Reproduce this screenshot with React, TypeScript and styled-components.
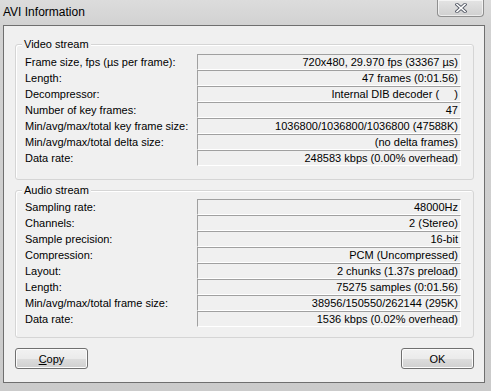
import React from 'react'
import styled, { createGlobalStyle } from 'styled-components'

const GlobalStyle = createGlobalStyle`
  html, body { margin:0; padding:0; background:#cbcbcb; }
  body { font-family:"Liberation Sans", Arial, sans-serif; }
`

const Frame = styled.div`
  width:491px;
  height:391px;
  box-sizing:border-box;
  padding:0 6px 8px 3px;
  display:flex;
  flex-direction:column;
  background:linear-gradient(#dcdcdc 0px, #d2d2d2 25px, #cbcbcb 100%);
`
const TitleBar = styled.div`
  height:25px;
  flex:none;
  display:flex;
  align-items:flex-start;
  justify-content:space-between;
`
const Title = styled.div`
  font-family:"Liberation Sans", Arial, sans-serif;
  font-size:12px;
  line-height:15px;
  padding-top:5px;
  color:#000;
`
const CloseButton = styled.div`
  width:47px;
  height:17px;
  margin-right:1px;
  box-sizing:border-box;
  border:1px solid #8f8f8f;
  border-top:none;
  border-radius:0 0 4px 4px;
  background:linear-gradient(#e4e4e4, #d0d0d0);
  box-shadow:inset 0 0 0 1px rgba(255,255,255,0.6);
  display:flex;
  align-items:center;
  justify-content:center;
`
const Client = styled.div`
  flex:1;
  box-sizing:border-box;
  border:1px solid #6f6f6f;
  background:#f0f0f0;
  padding:18px 10px 13px 11px;
  display:flex;
  flex-direction:column;
  gap:10px;
`
const Group = styled.div<{ $top: number; $bottom: number }>`
  position:relative;
  border:1px solid #d5d5d5;
  border-radius:3px;
  box-shadow:inset 1px 1px 0 #fff;
  padding:${p => p.$top}px 10px ${p => p.$bottom}px 9px;
`
const Legend = styled.span`
  position:absolute;
  top:-8px;
  left:6px;
  padding:0 2px;
  background:#f0f0f0;
  font-size:11px;
  line-height:14px;
  color:#000;
`
const Row = styled.div`
  display:grid;
  grid-template-columns:172px 264px;
  height:16px;
  align-items:center;
`
const Label = styled.span`
  font-size:11px;
  line-height:14px;
  color:#000;
  white-space:nowrap;
`
const Value = styled.div`
  height:16px;
  box-sizing:border-box;
  border-top:1px solid #a0a0a0;
  border-left:1px solid #a0a0a0;
  border-right:1px solid #fff;
  border-bottom:1px solid #fff;
  padding-right:2px;
  text-align:right;
  font-size:11px;
  line-height:14px;
  color:#000;
  white-space:pre;
`
const ButtonRow = styled.div`
  display:flex;
  justify-content:space-between;
`
const Button = styled.button`
  width:73px;
  height:21px;
  box-sizing:border-box;
  border:1px solid #707070;
  border-radius:3px;
  background:linear-gradient(#f2f2f2 0%, #ebebeb 50%, #dddddd 51%, #cfcfcf 100%);
  box-shadow:inset 0 0 0 1px #fcfcfc;
  font-family:"Liberation Sans", Arial, sans-serif;
  font-size:11px;
  color:#000;
  padding:0;
  u { text-decoration:underline; }
`

const video: [string, string][] = [
  ['Frame size, fps (µs per frame):', '720x480, 29.970 fps (33367 µs)'],
  ['Length:', '47 frames (0:01.56)'],
  ['Decompressor:', 'Internal DIB decoder (     )'],
  ['Number of key frames:', '47'],
  ['Min/avg/max/total key frame size:', '1036800/1036800/1036800 (47588K)'],
  ['Min/avg/max/total delta size:', '(no delta frames)'],
  ['Data rate:', '248583 kbps (0.00% overhead)'],
]

const audio: [string, string][] = [
  ['Sampling rate:', '48000Hz'],
  ['Channels:', '2 (Stereo)'],
  ['Sample precision:', '16-bit'],
  ['Compression:', 'PCM (Uncompressed)'],
  ['Layout:', '2 chunks (1.37s preload)'],
  ['Length:', '75275 samples (0:01.56)'],
  ['Min/avg/max/total frame size:', '38956/150550/262144 (295K)'],
  ['Data rate:', '1536 kbps (0.02% overhead)'],
]

export default function App() {
  return (
    <Frame>
      <GlobalStyle />
      <TitleBar>
        <Title>AVI Information</Title>
        <CloseButton>
          <svg width="12" height="10" viewBox="0 0 12 10">
            <path d="M2 1.5 L10 8.5 M10 1.5 L2 8.5" stroke="#555a66" strokeWidth="3.4" strokeLinecap="square" />
            <path d="M2 1.5 L10 8.5 M10 1.5 L2 8.5" stroke="#ffffff" strokeWidth="1.6" strokeLinecap="square" />
          </svg>
        </CloseButton>
      </TitleBar>
      <Client>
        <Group $top={9} $bottom={13}>
          <Legend>Video stream</Legend>
          {video.map(([k, v], i) => (
            <Row key={i}>
              <Label>{k}</Label>
              <Value>{v}</Value>
            </Row>
          ))}
        </Group>
        <Group $top={8} $bottom={10}>
          <Legend>Audio stream</Legend>
          {audio.map(([k, v], i) => (
            <Row key={i}>
              <Label>{k}</Label>
              <Value>{v}</Value>
            </Row>
          ))}
        </Group>
        <ButtonRow>
          <Button><u>C</u>opy</Button>
          <Button>OK</Button>
        </ButtonRow>
      </Client>
    </Frame>
  )
}
